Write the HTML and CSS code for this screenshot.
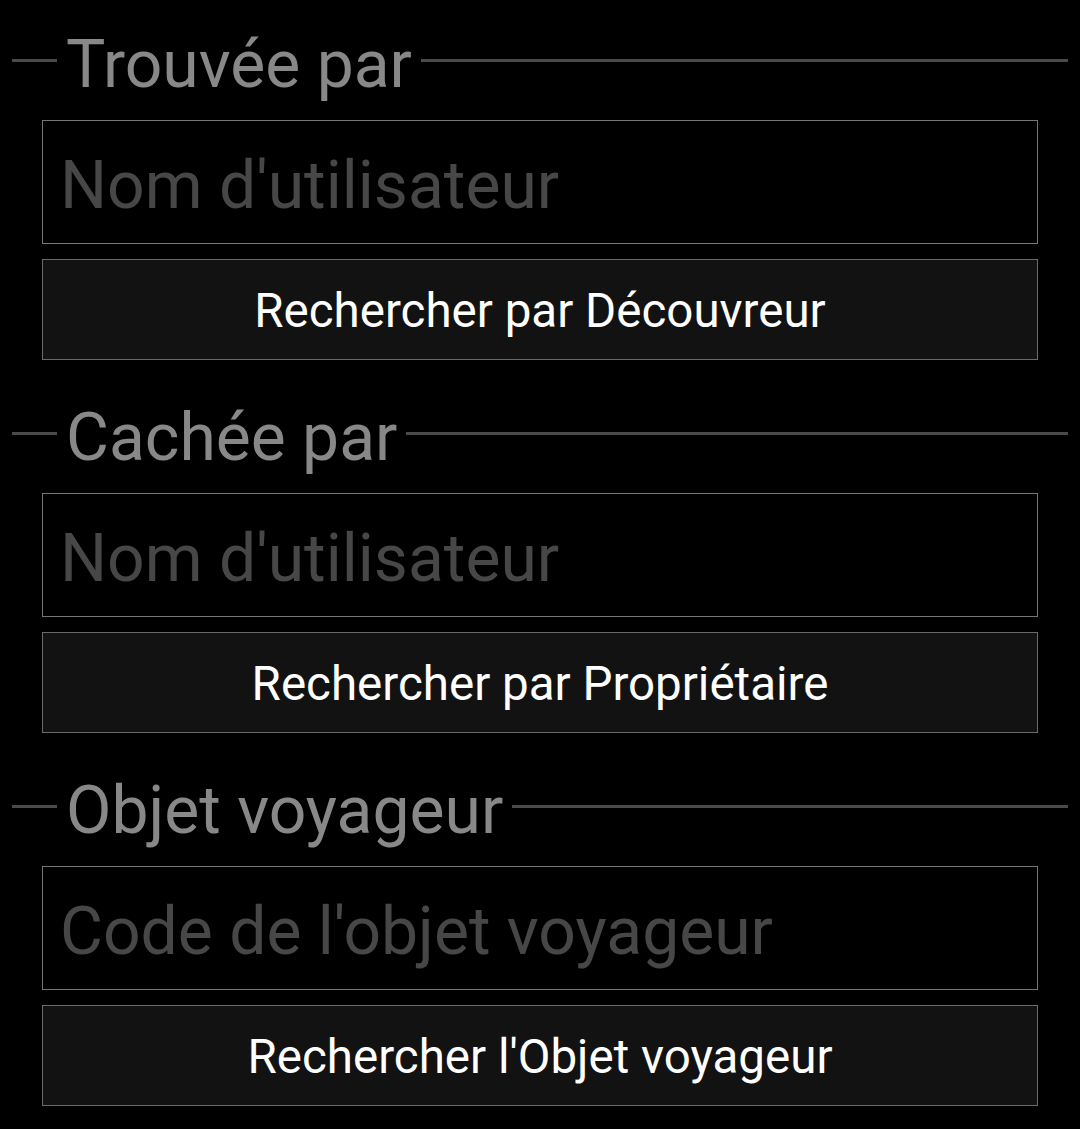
FILE: index.html
```html
<!DOCTYPE html>
<html lang="fr">
<head>
<meta charset="utf-8">
<link rel="stylesheet" href="styles.css">
</head>
<body>
<main class="page">
  <section class="group">
    <div class="legend"><span class="rule rule-left"></span><span class="legend-text">Trouvée par</span><span class="rule rule-right"></span></div>
    <div class="field"><input class="input" type="text" placeholder="Nom d'utilisateur"></div>
    <button class="btn" type="button">Rechercher par Découvreur</button>
  </section>
  <section class="group">
    <div class="legend"><span class="rule rule-left"></span><span class="legend-text">Cachée par</span><span class="rule rule-right"></span></div>
    <div class="field"><input class="input" type="text" placeholder="Nom d'utilisateur"></div>
    <button class="btn" type="button">Rechercher par Propriétaire</button>
  </section>
  <section class="group">
    <div class="legend"><span class="rule rule-left"></span><span class="legend-text">Objet voyageur</span><span class="rule rule-right"></span></div>
    <div class="field"><input class="input" type="text" placeholder="Code de l'objet voyageur"></div>
    <button class="btn" type="button">Rechercher l'Objet voyageur</button>
  </section>
</main>
</body>
</html>
```
FILE: styles.css
```css
html, body {
  margin: 0;
  padding: 0;
  background: #000;
}
body {
  font-family: Roboto, "Noto Sans", sans-serif;
  width: 1080px;
  height: 1129px;
  overflow: hidden;
}
.page {
  display: flex;
  flex-direction: column;
  padding-top: 20px;
}
.group {
  display: flex;
  flex-direction: column;
  padding-bottom: 33px;
}
.legend {
  display: flex;
  align-items: flex-start;
  height: 90px;
  padding: 0 12px;
}
.rule {
  height: 3px;
  background: #4a4a4a;
  margin-top: 39px;
}
.rule-left {
  width: 45px;
  flex: none;
}
.rule-right {
  flex: 1;
}
.legend-text {
  color: #888;
  font-size: 66px;
  line-height: 90px;
  padding: 0 9px;
  white-space: nowrap;
}
.field {
  margin: 10px 42px 0;
}
.input {
  display: block;
  box-sizing: border-box;
  width: 100%;
  height: 124px;
  margin: 0;
  background: #000;
  border: 1px solid #767676;
  border-radius: 0;
  padding: 6px 0 0 17px;
  font-family: Roboto, "Noto Sans", sans-serif;
  font-size: 66px;
  color: #ddd;
  outline: none;
}
.input::placeholder {
  color: #474747;
  opacity: 1;
}
.btn {
  display: block;
  box-sizing: border-box;
  margin: 15px 42px 0;
  height: 101px;
  background: #121212;
  border: 1px solid #6a6a6a;
  border-radius: 0;
  color: #fff;
  font-family: Roboto, "Noto Sans", sans-serif;
  font-size: 47.5px;
  padding: 3px 0 0;
}
```
